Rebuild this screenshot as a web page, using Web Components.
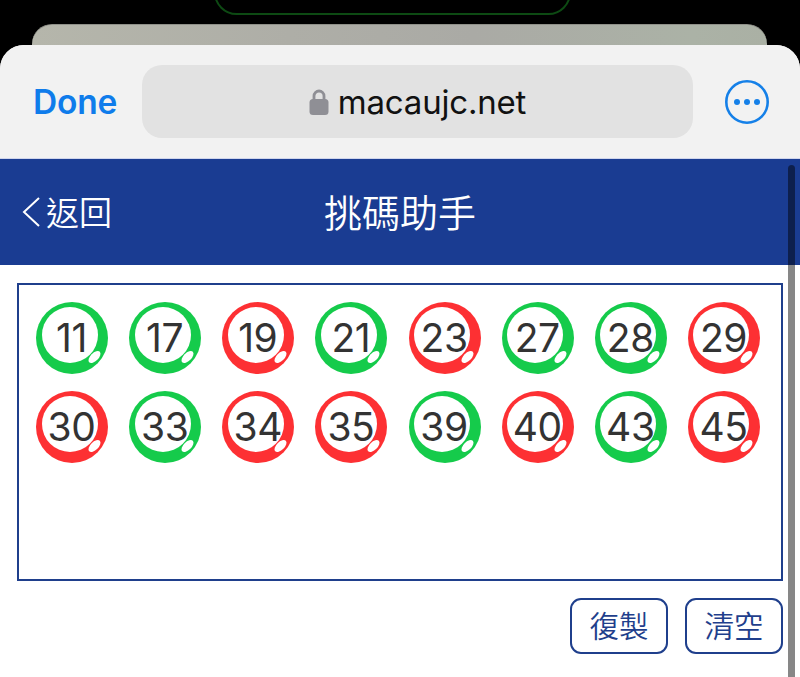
<!DOCTYPE html>
<html lang="zh-Hant"><head><meta charset="utf-8"><title>挑碼助手</title>
<style>
html,body{margin:0;height:100%;background:#000;overflow:hidden}
body{font-family:Inter,"Noto Sans CJK TC",sans-serif}
</style></head><body>
<app-screen>
  <device-backdrop></device-backdrop>
  <browser-sheet>
    <browser-toolbar url="macaujc.net"></browser-toolbar>
    <page-header title="挑碼助手" back="返回"></page-header>
    <picker-page>
      <ball-tray>
        <lotto-ball n="11" c="g"></lotto-ball><lotto-ball n="17" c="g"></lotto-ball><lotto-ball n="19" c="r"></lotto-ball><lotto-ball n="21" c="g"></lotto-ball><lotto-ball n="23" c="r"></lotto-ball><lotto-ball n="27" c="g"></lotto-ball><lotto-ball n="28" c="g"></lotto-ball><lotto-ball n="29" c="r"></lotto-ball>
        <lotto-ball n="30" c="r"></lotto-ball><lotto-ball n="33" c="g"></lotto-ball><lotto-ball n="34" c="r"></lotto-ball><lotto-ball n="35" c="r"></lotto-ball><lotto-ball n="39" c="g"></lotto-ball><lotto-ball n="40" c="r"></lotto-ball><lotto-ball n="43" c="g"></lotto-ball><lotto-ball n="45" c="r"></lotto-ball>
      </ball-tray>
      <div slot="actions" style="display:contents"><action-button>復製</action-button><action-button>清空</action-button></div>
    </picker-page>
  </browser-sheet>
</app-screen>
<script>
function def(name, css, html){
  customElements.define(name, class extends HTMLElement{
    constructor(){super();this.attachShadow({mode:'open'});}
    connectedCallback(){
      const a=n=>this.getAttribute(n)||'';
      this.shadowRoot.innerHTML='<style>'+css+'</style>'+(typeof html==='function'?html(a):html);
    }
  });
}
def('app-screen',':host{display:flex;flex-direction:column;width:800px;height:677px;overflow:hidden;background:#000}','<slot></slot>');
def('device-backdrop',`:host{display:flex;flex-direction:column;height:45px;flex:none;overflow:hidden}
.island{margin:-30px 0 0 214px;width:357px;height:44.5px;box-sizing:border-box;border:2px solid #0d4a13;border-radius:30px;flex:none}
.card{margin:9.5px 33px 0 32px;height:40px;flex:none;border-radius:20px 20px 0 0;background:linear-gradient(90deg,#b5b6ab 0%,#aeaea7 35%,#aaaaa5 60%,#abb2a6 90%,#aab0a4 100%);border-top:1px solid #8f9089;box-sizing:border-box}`,
'<div class="island"></div><div class="card"></div>');
def('browser-sheet',`:host{display:flex;flex-direction:column;flex:1;min-height:0;border-radius:24px 24px 0 0;overflow:hidden;background:#fff;position:relative}
.bar{position:absolute;left:788px;top:120px;bottom:0;width:7px;border-radius:4px 4px 0 0;background:rgba(0,0,0,.47)}`,
'<slot></slot><div class="bar"></div>');
def('browser-toolbar',`:host{display:flex;align-items:center;flex:none;height:114px;box-sizing:border-box;padding:20px 24px 20px 33px;background:#f2f2f2;border-bottom:1px solid #cfd5ec;font-family:Inter,sans-serif}
.done{font-size:33.5px;font-weight:600;color:#0f7ceb;width:109px;letter-spacing:-.2px}
.url{width:551px;height:73px;border-radius:20px;background:#e2e2e2;display:flex;align-items:center;justify-content:center;gap:9px;font-size:33px;color:#111;letter-spacing:-.2px}
.more{margin-left:32px;width:44px;height:44px;display:block}
.lock{width:20px;height:27px;display:block;margin-top:-1px}`,
a=>`<span class="done">Done</span><div class="url"><svg class="lock" viewBox="0 0 20 27"><path d="M5 12V8a5 5 0 0 1 10 0v4" fill="none" stroke="#8f8f95" stroke-width="2.8"/><rect x="0.5" y="11" width="19" height="16" rx="3.5" fill="#8f8f95"/></svg><span>${a('url')}</span></div><svg class="more" viewBox="0 0 44 44"><circle cx="22" cy="22" r="20.7" fill="none" stroke="#1580e8" stroke-width="2.6"/><circle cx="12" cy="22" r="3" fill="#1580e8"/><circle cx="22" cy="22" r="3" fill="#1580e8"/><circle cx="32" cy="22" r="3" fill="#1580e8"/></svg>`);
def('page-header',`:host{display:grid;grid-template-columns:1fr auto 1fr;align-items:center;flex:none;height:106px;padding:0 0 0 22px;box-sizing:border-box;background:#1a3c92;color:#fff;font-family:"Noto Sans CJK TC",sans-serif}
.back{display:flex;align-items:center;gap:6px;font-size:33px;line-height:1;font-weight:350}
.back span{padding-bottom:2px}
svg{width:18px;height:30px;display:block}
h1{margin:0 0 3px;font-size:38px;font-weight:350;line-height:1;transform:translateX(-11px)}`,
a=>`<div class="back"><svg viewBox="0 0 18 30"><path d="M17 1 2 15l15 14" fill="none" stroke="#fff" stroke-width="2"/></svg><span>${a('back')}</span></div><h1>${a('title')}</h1><span></span>`);
def('picker-page',`:host{display:flex;flex-direction:column;flex:1;min-height:0;padding:18px 17px 0;background:#fff}
.actions{display:flex;justify-content:flex-end;gap:17px;margin-top:17px}`,
'<slot></slot><div class="actions"><slot name="actions"></slot></div>');
def('ball-tray',`:host{display:block;height:298px;box-sizing:border-box;border:2px solid #1f3f8c;padding:17px 21px 0 17px}
.g{display:grid;grid-template-columns:repeat(8,72px);justify-content:space-between;row-gap:17px}`,
'<div class="g"><slot></slot></div>');
def('lotto-ball',`:host{display:block;width:72px;height:72px;position:relative;font-family:Inter,sans-serif}
.o{width:72px;height:72px;border-radius:50%;display:block}
.i{position:absolute;left:5.5px;top:4.5px;width:56px;height:56px;border-radius:50%;background:#fff}
.n{position:absolute;left:0;top:0;width:71px;height:71px;display:flex;align-items:center;justify-content:center;font-size:39px;color:#333;letter-spacing:-.4px}
.h{position:absolute;left:51px;top:51px;width:15px;height:8px;border-radius:50%;background:#fff;transform:rotate(-45deg)}`,
a=>`<div class="o" style="background:${a('c')==='g'?'#15cb4b':'#fd3033'}"></div><div class="i"></div><div class="h"></div><div class="n">${a('n')}</div>`);
def('action-button',`:host{display:flex;align-items:center;justify-content:center;box-sizing:border-box;width:98px;height:56px;padding-bottom:2px;border:2px solid #1f3f8c;border-radius:11px;color:#1f3f8c;font-family:"Noto Sans CJK TC",sans-serif;font-weight:350;font-size:29.5px;line-height:1}`,
'<slot></slot>');
</script>
</body></html>
